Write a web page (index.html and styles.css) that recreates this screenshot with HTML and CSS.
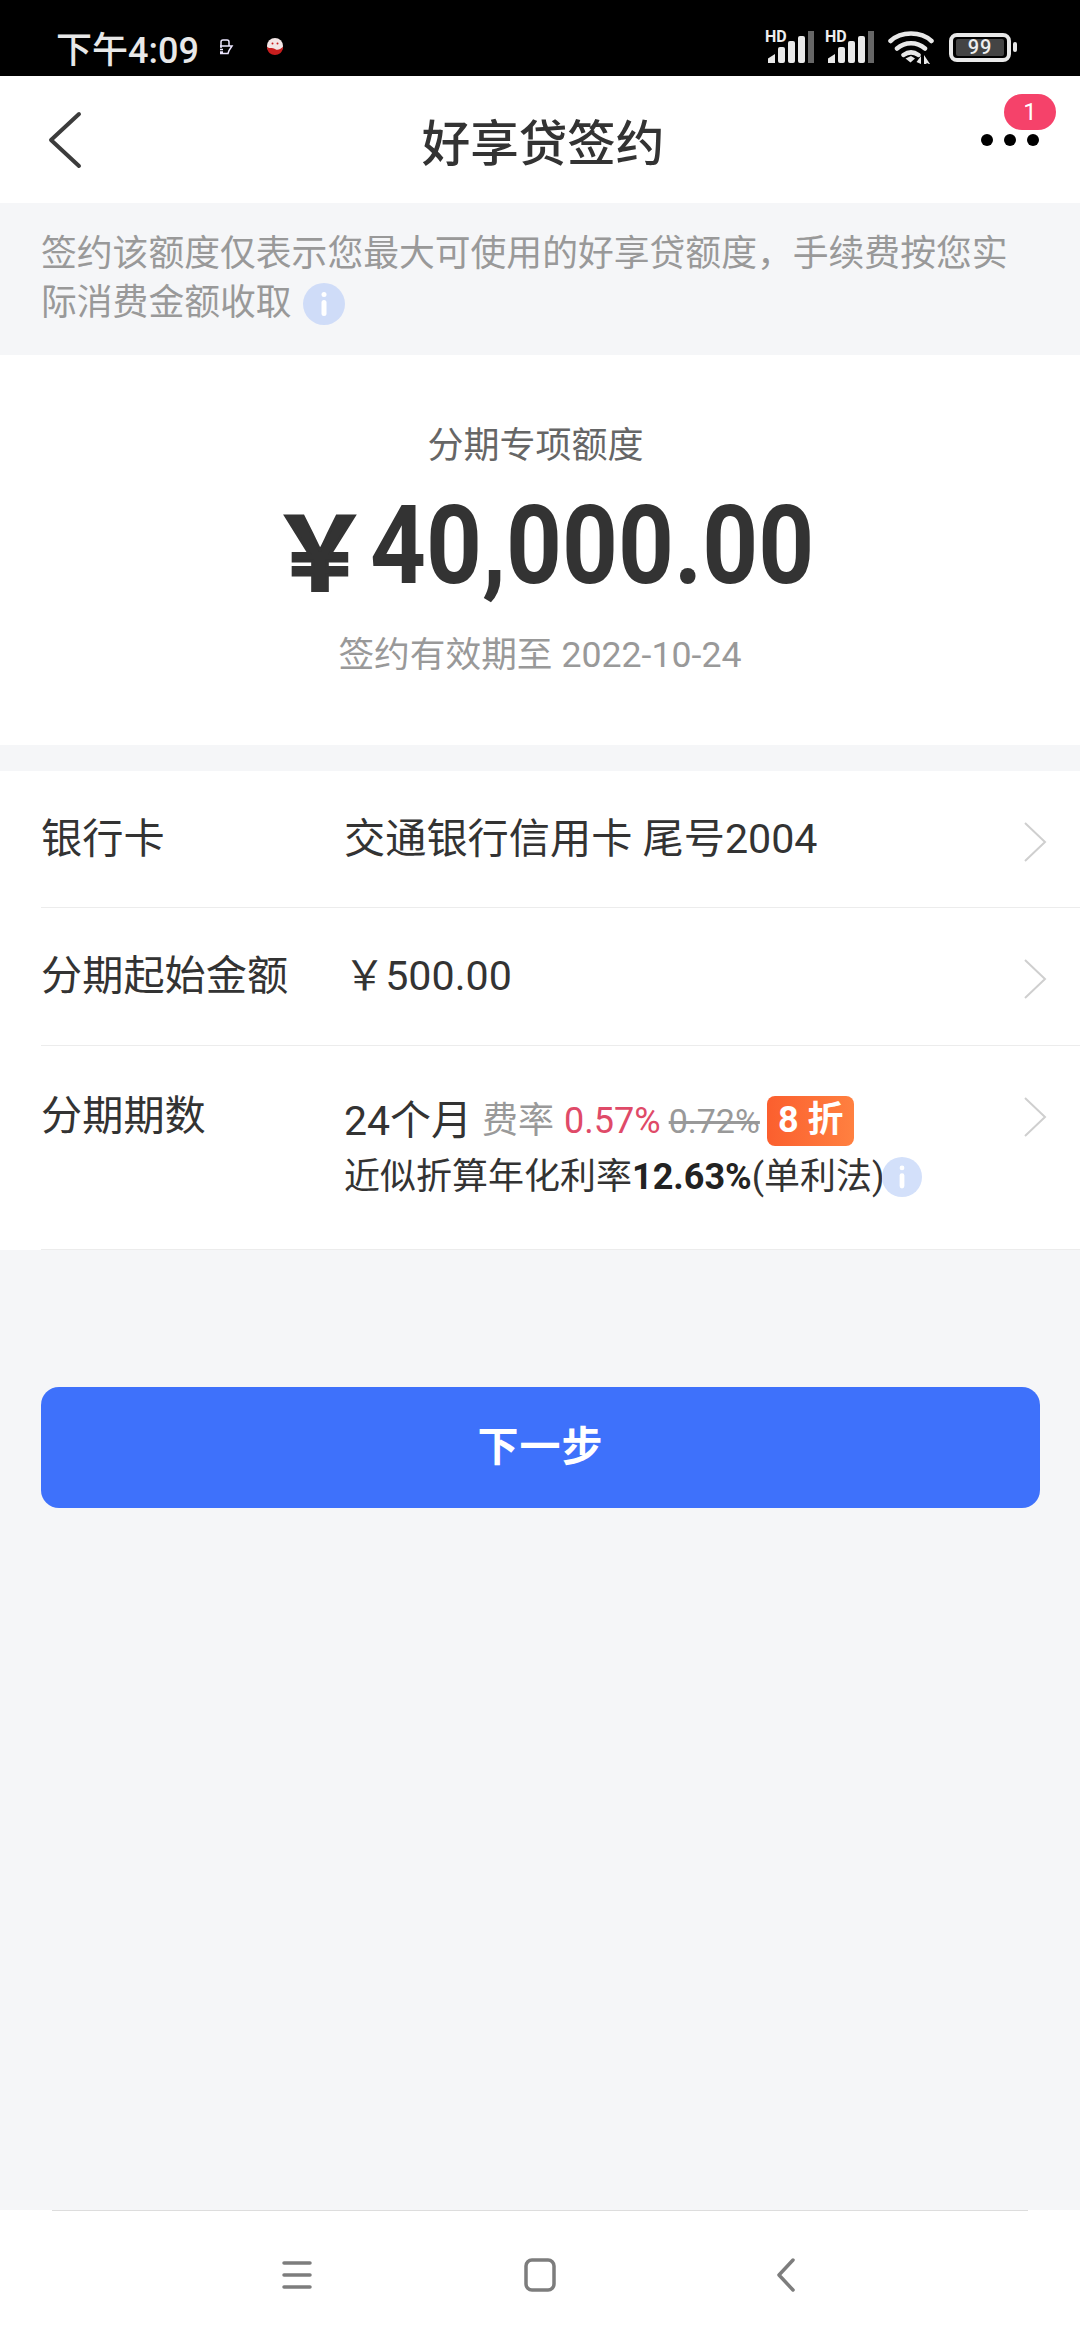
FILE: index.html
```html
<!DOCTYPE html>
<html lang="zh">
<head>
  <meta charset="UTF-8" />
  <meta name="viewport" content="width=device-width, initial-scale=1" />
  <title>好享贷签约</title>
  <link rel="stylesheet" href="styles.css">
</head>
<body>
  <div class="status-bar">
    <div class="status-left">
      <span class="clock">下午4:09</span>
      <svg class="note-icon" width="16" height="16" viewBox="0 0 16 16">
        <path d="M3 9V3q0-2 2-2h4q2 0 2 2v4M2 7h12l-3 4.500-1 3H2M2 10.500h3M2 13h3" fill="none" stroke="#ece6ff" stroke-width="1.500"/>
      </svg>
      <svg class="mascot-icon" width="18" height="18" viewBox="0 0 18 18">
        <circle cx="9" cy="8" r="8" fill="#f3e6e6"/>
        <path d="M1 9c3 2 5 0 8 2s5 0 8-2c0 5-4 8-8 8s-8-3-8-8z" fill="#c81e1e"/>
        <circle cx="6.500" cy="5.500" r="1" fill="#c81e1e"/>
        <circle cx="11.500" cy="5.500" r="1" fill="#c81e1e"/>
      </svg>
    </div>
    <div class="status-right">
      <div class="signal">
        <span class="hd">HD</span>
        <svg width="50" height="32" viewBox="0 0 50 32">
          <path d="M3 32v-4.500L10 23v9z" fill="#e8e8e8"/>
          <rect x="13" y="16" width="7" height="16" rx="2" fill="#e8e8e8"/>
          <rect x="23" y="10" width="7" height="22" rx="2" fill="#e8e8e8"/>
          <rect x="33" y="5" width="7" height="27" rx="2" fill="#e8e8e8"/>
          <rect x="43" y="0" width="6" height="32" fill="#666"/>
        </svg>
      </div>
      <div class="signal">
        <span class="hd">HD</span>
        <svg width="50" height="32" viewBox="0 0 50 32">
          <path d="M3 32v-4.500L10 23v9z" fill="#e8e8e8"/>
          <rect x="13" y="16" width="7" height="16" rx="2" fill="#e8e8e8"/>
          <rect x="23" y="10" width="7" height="22" rx="2" fill="#e8e8e8"/>
          <rect x="33" y="5" width="7" height="27" rx="2" fill="#e8e8e8"/>
          <rect x="43" y="0" width="6" height="32" fill="#666"/>
        </svg>
      </div>
      <svg class="wifi" width="46" height="34" viewBox="0 0 46 34">
        <path d="M2.500 11C13 1 33 1 43.500 11M9 18.500c8-7 20-7 28 0M15.500 25c5-3.500 10-3.500 15 0" fill="none" stroke="#e8e8e8" stroke-width="4.500" stroke-linecap="round"/>
        <path d="M17.500 28.500L23 26l4 2.500-4.500 4z" fill="#e8e8e8"/>
        <path d="M33 34v-8l-4.500 6zM36 25v9h2l1-1 2 1h1z" fill="#e8e8e8"/>
      </svg>
      <div class="battery">
        <div class="battery-body"><span class="battery-fill">99</span></div>
        <div class="battery-tip"></div>
      </div>
    </div>
  </div>

  <header class="topbar">
    <svg class="back" width="35" height="58" viewBox="0 0 35 58">
      <path d="M32 3L4 29l28 26" fill="none" stroke="#3c3c3c" stroke-width="4" stroke-linecap="round" stroke-linejoin="round"/>
    </svg>
    <h1>好享贷签约</h1>
    <div class="more">
      <span class="dot"></span><span class="dot"></span><span class="dot"></span>
      <span class="badge">1</span>
    </div>
  </header>

  <div class="notice">
    签约该额度仅表示您最大可使用的好享贷额度，手续费按您实际消费金额收取
    <svg class="info info-inline" width="42" height="42" viewBox="0 0 42 42">
      <circle cx="21" cy="21" r="21" fill="#cfdcf8"/>
      <rect x="18.500" y="9" width="5" height="5" rx="2.500" fill="#fff"/>
      <rect x="18.500" y="17" width="5" height="16" rx="2.500" fill="#fff"/>
    </svg>
  </div>

  <section class="amount-card">
    <div class="amount-label">分期专项额度</div>
    <div class="amount-value"><span class="yen">￥</span><span class="digits">40,000.00</span></div>
    <div class="amount-date">签约有效期至 2022-10-24</div>
  </section>

  <section class="list">
    <div class="row row-card">
      <div class="row-label">银行卡</div>
      <div class="row-value">交通银行信用卡 尾号2004</div>
      <svg class="chevron" width="24" height="42" viewBox="0 0 24 42"><path d="M2 2l20 19L2 40" fill="none" stroke="#cfcfcf" stroke-width="2"/></svg>
    </div>
    <div class="row row-start">
      <div class="row-label">分期起始金额</div>
      <div class="row-value">￥500.00</div>
      <svg class="chevron" width="24" height="42" viewBox="0 0 24 42"><path d="M2 2l20 19L2 40" fill="none" stroke="#cfcfcf" stroke-width="2"/></svg>
    </div>
    <div class="row row-term">
      <div class="row-label">分期期数</div>
      <div class="row-value">
        <div class="term-line">
          <span class="term">24个月</span>
          <span class="rate-label">费率</span>
          <span class="rate">0.57%</span>
          <span class="rate-old">0.72%</span>
          <span class="discount">8 折</span>
        </div>
        <div class="apr-line">近似折算年化利率<b>12.63%</b>(单利法)<svg class="info" width="40" height="40" viewBox="0 0 42 42">
            <circle cx="21" cy="21" r="21" fill="#d3e0fa"/>
            <rect x="18.500" y="9" width="5" height="5" rx="2.500" fill="#fff"/>
            <rect x="18.500" y="17" width="5" height="16" rx="2.500" fill="#fff"/>
          </svg></div>
      </div>
      <svg class="chevron" width="24" height="42" viewBox="0 0 24 42"><path d="M2 2l20 19L2 40" fill="none" stroke="#cfcfcf" stroke-width="2"/></svg>
    </div>
  </section>

  <main class="actions">
    <button class="next">下一步</button>
  </main>

  <footer class="navbar">
    <svg width="34" height="30" viewBox="0 0 34 30">
      <path d="M4 3h26M4 15h26M4 27h26" stroke="#7d7d7d" stroke-width="3.500" stroke-linecap="round"/>
    </svg>
    <svg class="nav-home" width="32" height="34" viewBox="0 0 32 34">
      <rect x="2" y="2" width="28" height="30" rx="6" fill="none" stroke="#7d7d7d" stroke-width="3.500"/>
    </svg>
    <svg class="nav-back" width="20" height="34" viewBox="0 0 20 34">
      <path d="M17 2L3 17l14 15" fill="none" stroke="#7d7d7d" stroke-width="3.500" stroke-linecap="round" stroke-linejoin="round"/>
    </svg>
  </footer>
</body>
</html>
```

FILE: styles.css
```css
:root {
  --blue: #3e71fb;
  --bg: #f5f6f8;
  --text: #333333;
  --muted: #999999;
  --line: #ececec;
}

* {
  box-sizing: border-box;
}

body {
  margin: 0;
  display: flex;
  flex-direction: column;
  height: 2340px;
  overflow: hidden;
  background: var(--bg);
  color: var(--text);
  font-family: Roboto, "Noto Sans CJK SC", sans-serif;
}

/* status bar */
.status-bar {
  height: 76px;
  flex: none;
  background: #000;
  color: #e8e8e8;
  display: flex;
  align-items: center;
  justify-content: space-between;
  padding: 18px 63px 0 56px;
}

.status-left {
  display: flex;
  align-items: center;
}

.clock {
  font-size: 36px;
  font-weight: 500;
  width: 162px;
}

.mascot-icon {
  margin-left: 32px;
}

.status-right {
  display: flex;
  align-items: center;
}

.signal {
  position: relative;
  width: 50px;
  height: 32px;
  margin-right: 10px;
}

.signal + .wifi {
  margin-left: 3px;
}

.hd {
  position: absolute;
  left: 0;
  top: -1px;
  font-size: 16px;
  font-weight: 700;
  color: #eee;
  line-height: 13px;
}

.signal svg {
  display: block;
}

.battery {
  display: flex;
  align-items: center;
  gap: 2px;
  margin-left: 15px;
}

.battery-body {
  width: 62px;
  height: 29px;
  border: 4px solid #e8e8e8;
  border-radius: 8px;
  padding: 2px 3px;
}

.battery-fill {
  display: block;
  height: 100%;
  background: #444;
  border-radius: 2px;
  color: #eee;
  font-size: 20px;
  font-weight: 500;
  line-height: 17px;
  letter-spacing: 1px;
  text-align: center;
}

.battery-tip {
  width: 4px;
  height: 10px;
  background: #e8e8e8;
  border-radius: 2px;
}

/* title bar */
.topbar {
  height: 127px;
  flex: none;
  background: #fff;
  display: grid;
  grid-template-columns: 1fr auto 1fr;
  align-items: center;
  padding: 0 41px 0 47px;
}

.topbar h1 {
  margin: 0;
  font-size: 48.500px;
  font-weight: 500;
  color: var(--text);
}

.more {
  position: relative;
  display: flex;
  gap: 11px;
  justify-self: end;
}

.dot {
  width: 12px;
  height: 12px;
  border-radius: 50%;
  background: #000;
}

.badge {
  position: absolute;
  left: 23px;
  top: -40px;
  width: 52px;
  height: 36px;
  border-radius: 18px;
  background: #f5426a;
  color: #fff;
  font-size: 24px;
  line-height: 36px;
  text-align: center;
}

/* notice */
.notice {
  height: 152px;
  flex: none;
  padding: 27px 41px 0;
  font-size: 35.800px;
  line-height: 49px;
  color: var(--muted);
}

.info {
  vertical-align: middle;
}

.info-inline {
  margin-left: 3px;
  margin-top: -4px;
}

/* amount */
.amount-card {
  height: 390px;
  flex: none;
  background: #fff;
  text-align: center;
  padding-top: 68px;
}

.amount-label {
  font-size: 36px;
  line-height: 46px;
  color: #666;
  margin-left: -9px;
}

.amount-value {
  display: flex;
  align-items: center;
  justify-content: center;
  height: 120px;
  margin-top: 17px;
  padding-left: 5px;
  color: var(--text);
  font-weight: 700;
}

.yen {
  font-size: 100px;
  width: 100px;
  -webkit-text-stroke: 3px var(--text);
}

.digits {
  display: inline-block;
  width: 445px;
  font-size: 110px;
  line-height: 120px;
  text-align: left;
  white-space: nowrap;
  transform: scaleX(0.887);
  transform-origin: left center;
}

.amount-date {
  font-size: 35.700px;
  line-height: 46px;
  color: var(--muted);
  margin-top: 26px;
}

/* list */
.list {
  margin-top: 26px;
  flex: none;
  background: #fff;
  padding-left: 41px;
}

.row {
  position: relative;
  display: flex;
  border-bottom: 1px solid var(--line);
  color: var(--text);
  font-size: 41.200px;
}

.row-card {
  height: 137px;
  padding-top: 42px;
}

.row-start {
  height: 138px;
  padding-top: 42px;
}

.row-term {
  height: 204px;
  padding-top: 44px;
}

.row-label {
  width: 303px;
  flex: none;
  line-height: 52px;
}

.row-value {
  line-height: 52px;
}

.chevron {
  position: absolute;
  right: 33px;
  top: 50px;
}

.term-line {
  display: flex;
  align-items: center;
  height: 52px;
  margin-top: 5px;
  white-space: nowrap;
}

.term {
  font-size: 41px;
}

.rate-label {
  font-size: 36px;
  color: var(--muted);
  margin-left: 10px;
}

.rate {
  font-size: 36px;
  color: #df4a68;
  margin-left: 10px;
}

.rate-old {
  font-size: 34px;
  color: var(--muted);
  text-decoration: line-through;
  margin-left: 8px;
}

.discount {
  margin-left: 7px;
  height: 50px;
  padding: 0 11px;
  border-radius: 8px;
  background: linear-gradient(90deg, #fb5f2e, #ff8040);
  color: #fff;
  font-size: 36px;
  font-weight: 700;
  line-height: 48px;
}

.apr-line {
  font-size: 36px;
  line-height: 46px;
  margin-top: 7px;
  white-space: nowrap;
}

.apr-line b {
  color: #222;
}

.apr-line .info {
  margin-left: -3px;
  margin-top: -4px;
}

/* button */
.actions {
  flex: 1;
  padding: 137px 41px 0 41px;
}

.next {
  display: block;
  width: 999px;
  height: 121px;
  padding: 0 0 10px;
  border: none;
  border-radius: 18px;
  background: var(--blue);
  color: #fff;
  font-family: inherit;
  font-size: 41px;
  font-weight: 700;
  letter-spacing: 1px;
}

/* navigation bar */
.navbar {
  height: 130px;
  flex: none;
  background: #fff;
  position: relative;
  display: flex;
  align-items: center;
  padding-left: 280px;
}

.navbar::before {
  content: "";
  position: absolute;
  top: 0;
  left: 52px;
  right: 52px;
  height: 1px;
  background: #dddddd;
}

.nav-home {
  margin-left: 210px;
}

.nav-back {
  margin-left: 220px;
}
```
